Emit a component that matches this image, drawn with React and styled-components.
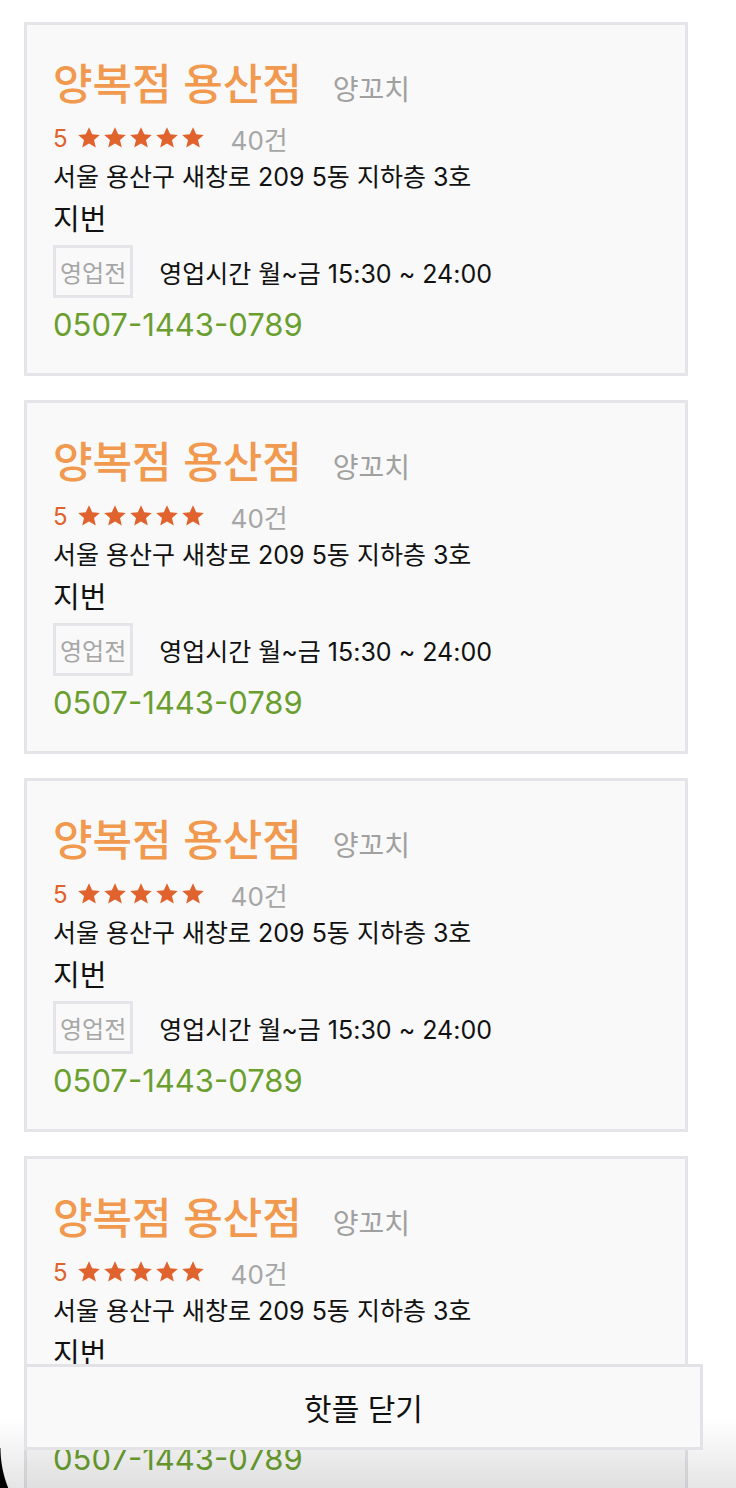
import React from 'react';
import styled, { createGlobalStyle } from 'styled-components';

const GlobalStyle = createGlobalStyle`
  html, body {
    margin: 0;
    padding: 0;
    background: #ffffff;
  }
  body {
    font-family: "Inter", "Noto Sans CJK KR", sans-serif;
  }
`;

const Page = styled.div`
  display: flex;
  flex-direction: column;
  gap: 24px;
  padding: 22px 48px 24px 24px;
`;

const Card = styled.div`
  border: 3px solid #e5e5e9;
  background: #f9f9f9;
  padding: 32px 26px 28px;
  display: flex;
  flex-direction: column;
`;

const TitleRow = styled.div`
  display: flex;
  align-items: baseline;
  gap: 31px;
`;

const Title = styled.h2`
  margin: 0;
  font-size: 43px;
  font-weight: 500;
  color: #f0994f;
  line-height: 54px;
`;

const Category = styled.span`
  font-size: 28px;
  color: #a0a0a0;
`;

const RatingRow = styled.div`
  display: flex;
  align-items: center;
  margin-top: 13px;
  height: 28px;
`;

const Score = styled.span`
  font-size: 24px;
  color: #e0622c;
  margin-right: 9px;
`;

const Stars = styled.span`
  display: flex;
  gap: 2px;
`;

const Count = styled.span`
  font-size: 26px;
  color: #a6a6a6;
  margin-left: 26px;
`;

const Address = styled.div`
  font-size: 25px;
  color: #111;
  margin-top: 10px;
  line-height: 30px;
`;

const Jibun = styled.div`
  font-size: 29px;
  color: #111;
  line-height: 36px;
  margin-top: 10px;
`;

const HoursRow = styled.div`
  display: flex;
  align-items: center;
  gap: 26px;
  margin-top: 7px;
`;

const Badge = styled.span`
  border: 3px solid #e5e5e9;
  padding: 0 4px;
  height: 47px;
  display: flex;
  align-items: center;
  font-size: 24px;
  color: #a6a6a6;
`;

const Hours = styled.span`
  font-size: 25px;
  color: #111;
`;

const Phone = styled.div`
  font-size: 31px;
  color: #6a9f2f;
  margin-top: 7px;
  line-height: 40px;
`;

const CloseBar = styled.button`
  position: fixed;
  left: 24px;
  bottom: 38px;
  width: 679px;
  height: 86px;
  border: 3px solid #e3e3e7;
  background: #f9f9f9;
  font-family: "Inter", "Noto Sans CJK KR", sans-serif;
  font-size: 30px;
  color: #111;
  z-index: 2;
`;

const BottomShade = styled.div`
  position: fixed;
  left: 0;
  right: 0;
  bottom: 0;
  height: 70px;
  background: linear-gradient(rgba(0, 0, 0, 0), rgba(0, 0, 0, 0.1));
  pointer-events: none;
  z-index: 1;
`;

const Corner = styled.div`
  position: fixed;
  left: 0;
  bottom: 0;
  width: 12px;
  height: 40px;
  background: radial-gradient(circle at 108px 0, transparent 107px, #000 108px);
  z-index: 3;
`;

const Star = () => (
  <svg width="24" height="24" viewBox="0 0 24 24">
    <path fill="#e0622c" d="M12 1.2l3.2 7 7.6.7-5.8 5.1 1.8 7.5L12 17.6l-6.8 3.9 1.8-7.5-5.8-5.1 7.6-.7z" />
  </svg>
);

const places = [1, 2, 3, 4];

export default function App() {
  return (
    <>
      <GlobalStyle />
      <Page>
        {places.map((i) => (
          <Card key={i}>
            <TitleRow>
              <Title>양복점 용산점</Title>
              <Category>양꼬치</Category>
            </TitleRow>
            <RatingRow>
              <Score>5</Score>
              <Stars>
                {[0, 1, 2, 3, 4].map((s) => <Star key={s} />)}
              </Stars>
              <Count>40건</Count>
            </RatingRow>
            <Address>서울 용산구 새창로 209 5동 지하층 3호</Address>
            <Jibun>지번</Jibun>
            <HoursRow>
              <Badge>영업전</Badge>
              <Hours>영업시간 월~금 15:30 ~ 24:00</Hours>
            </HoursRow>
            <Phone>0507-1443-0789</Phone>
          </Card>
        ))}
      </Page>
      <BottomShade />
      <CloseBar>핫플 닫기</CloseBar>
      <Corner />
    </>
  );
}
